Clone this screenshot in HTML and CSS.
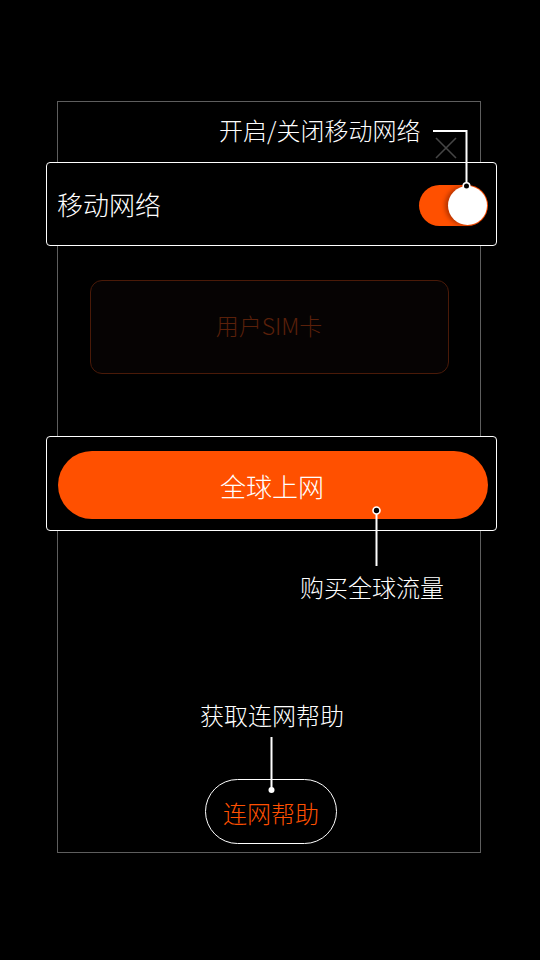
FILE: index.html
```html
<!DOCTYPE html>
<html lang="zh">
<head>
<meta charset="utf-8">
<link rel="stylesheet" href="styles.css">
</head>
<body>
<div class="page">
  <div class="frame">
    <div class="top">
      <svg class="close" width="22" height="22" viewBox="0 0 22 22"><path d="M1 1L21 21M21 1L1 21" stroke="#454545" stroke-width="1.6" fill="none"/></svg>
    </div>
    <div class="hl switch-row">
      <span class="row-label">移动网络</span>
      <div class="toggle"><div class="knob"></div></div>
    </div>
    <div class="sim">用户SIM卡</div>
    <div class="hl btn-row">
      <div class="primary">全球上网</div>
    </div>
    <div class="bottom">
      <div class="note">获取连网帮助</div>
      <div class="pill">连网帮助</div>
    </div>
    <div class="callout c1">开启/关闭移动网络</div>
    <div class="callout c2">购买全球流量</div>
  </div>
  <svg class="lines" width="540" height="960" viewBox="0 0 540 960">
    <polyline points="433,131 466.5,131 466.5,183" fill="none" stroke="#fff" stroke-width="2"/>
    <circle cx="466.5" cy="186" r="3.3" fill="#000" stroke="#fff" stroke-width="1.6"/>
    <line x1="376.5" y1="514" x2="376.5" y2="566" stroke="#fff" stroke-width="2"/>
    <circle cx="376.5" cy="510.5" r="3.5" fill="#000" stroke="#fff" stroke-width="1.6"/>
    <line x1="271.5" y1="737" x2="271.5" y2="789" stroke="#fff" stroke-width="2"/>
    <circle cx="271.5" cy="790" r="3" fill="#fff"/>
  </svg>
</div>
</body>
</html>
```
FILE: styles.css
```css
html, body {
  margin: 0;
  padding: 0;
  background: #000;
}
body {
  font-family: "Noto Sans CJK SC", "Noto Sans", sans-serif;
  font-weight: 300;
  color: #fff;
}
.page {
  position: relative;
  width: 540px;
  height: 960px;
  padding-top: 101px;
  box-sizing: border-box;
}
.frame {
  position: relative;
  box-sizing: border-box;
  margin-left: 57px;
  width: 424px;
  height: 752px;
  border: 1px solid #5e5e5e;
  display: flex;
  flex-direction: column;
}
.top {
  height: 60px;
  box-sizing: border-box;
  display: flex;
  justify-content: flex-end;
  align-items: flex-start;
  padding: 35px 23px 0 0;
}
.close {
  display: block;
}
.hl {
  box-sizing: border-box;
  margin: 0 -17px 0 -12px;
  border: 1px solid #fff;
  border-radius: 4px;
  background: #000;
  position: relative;
  z-index: 1;
}
.switch-row {
  height: 84px;
  display: flex;
  align-items: center;
  justify-content: space-between;
  padding: 0 8px 0 10px;
}
.row-label {
  font-size: 26px;
  line-height: 30px;
}
.toggle {
  width: 69px;
  height: 41px;
  border-radius: 21px;
  background: #ff5000;
  position: relative;
  margin-top: 2px;
}
.knob {
  position: absolute;
  right: 1px;
  top: 1px;
  width: 39px;
  height: 39px;
  border-radius: 50%;
  background: #fff;
  box-shadow: -3px 0 4px rgba(120, 30, 0, 0.55);
}
.sim {
  box-sizing: border-box;
  align-self: center;
  margin-top: 34px;
  width: 359px;
  height: 94px;
  border: 1.5px solid #4a1a08;
  border-radius: 12px;
  background: #060303;
  color: #5a200a;
  font-size: 23px;
  display: flex;
  align-items: center;
  justify-content: center;
  padding-bottom: 4px;
}
.btn-row {
  margin-top: 62px;
  height: 95px;
  padding: 14px 8px 0 11px;
}
.primary {
  height: 68px;
  border-radius: 34px;
  background: #ff5000;
  color: #fff;
  font-size: 26px;
  display: flex;
  align-items: center;
  justify-content: center;
  padding-right: 2px;
}
.bottom {
  margin-top: auto;
  padding-bottom: 8px;
  display: flex;
  flex-direction: column;
  align-items: center;
}
.note {
  font-size: 24px;
  line-height: 30px;
  margin-left: 6px;
}
.pill {
  box-sizing: border-box;
  margin-top: 49px;
  margin-left: 4px;
  width: 132px;
  height: 65px;
  border: 1px solid #fff;
  border-radius: 33px;
  color: #ff5000;
  font-size: 24px;
  display: flex;
  align-items: center;
  justify-content: center;
  padding-top: 2px;
}
.callout {
  position: absolute;
  font-size: 24px;
  line-height: 30px;
  white-space: nowrap;
}
.c1 {
  left: 161px;
  top: 13px;
}
.c2 {
  left: 242px;
  top: 470px;
}
.lines {
  position: absolute;
  left: 0;
  top: 0;
  pointer-events: none;
  z-index: 5;
}
```
